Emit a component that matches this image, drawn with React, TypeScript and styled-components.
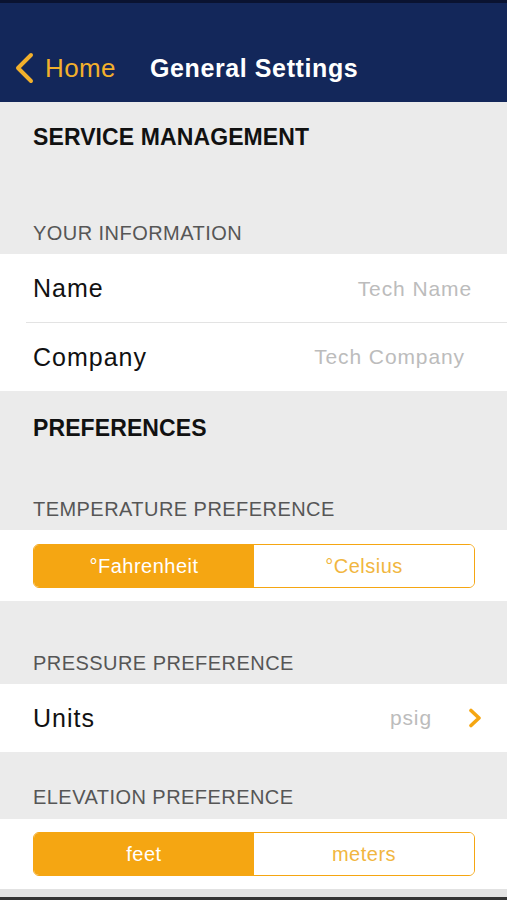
import React from "react";
import styled, { createGlobalStyle } from "styled-components";

const Global = createGlobalStyle`
  html, body { margin: 0; padding: 0; background: #ebebeb; }
  body { font-family: "Liberation Sans", Arial, sans-serif; -webkit-font-smoothing: antialiased; }
  * { box-sizing: border-box; }
`;

const ORANGE = "#f5a612";

const Page = styled.div`
  width: 507px;
  height: 900px;
  overflow: hidden;
  background: #ebebeb;
  display: flex;
  flex-direction: column;
`;

const NavBar = styled.header`
  height: 102px;
  background: #13275a;
  border-top: 3px solid #0a1331;
  display: flex;
  align-items: center;
  padding: 31px 0 0 14px;
  flex-shrink: 0;
`;

const Back = styled.div`
  display: flex;
  align-items: center;
  color: #f2b02c;
  font-size: 26px;
  line-height: 30px;
  letter-spacing: 0.4px;
  gap: 11px;
  width: 136px;
`;

const Title = styled.div`
  color: #ffffff;
  font-size: 25px;
  line-height: 30px;
  font-weight: 700;
  letter-spacing: 0.6px;
`;

const SectionTitle = styled.div<{ $h: number; $top: number }>`
  height: ${(p) => p.$h}px;
  padding: ${(p) => p.$top}px 33px 0;
  font-size: 23px;
  line-height: 23px;
  font-weight: 700;
  color: #111;
  letter-spacing: 0.1px;
`;

const GroupHeader = styled.div<{ $h: number; $bottom: number }>`
  height: ${(p) => p.$h}px;
  display: flex;
  align-items: flex-end;
  padding: 0 33px ${(p) => p.$bottom}px;
  font-size: 20px;
  line-height: 20px;
  color: #565656;
  letter-spacing: 0.45px;
`;

const Group = styled.div<{ $top?: number; $bottom?: number }>`
  background: #fff;
  display: flex;
  flex-direction: column;
  padding: ${(p) => (p.$top !== undefined ? `${p.$top}px 32px ${p.$bottom}px 33px` : "0")};
`;

const Row = styled.div<{ $sep?: boolean; $h?: number }>`
  height: ${(p) => p.$h ?? 68}px;
  display: flex;
  align-items: center;
  justify-content: space-between;
  padding: 0 0 0 33px;
  position: relative;
  ${(p) =>
    p.$sep
      ? `&::after { content: ""; position: absolute; left: 26px; right: 0; bottom: 0; height: 1px; background: #e3e3e3; }`
      : ""}
`;

const Label = styled.span`
  font-size: 25px;
  color: #111;
  letter-spacing: 1px;
`;

const Value = styled.span<{ $right: number }>`
  font-size: 21px;
  color: #bcbcbc;
  letter-spacing: 0.9px;
  margin-right: ${(p) => p.$right}px;
`;

const Detail = styled.div`
  display: flex;
  align-items: center;
  gap: 36px;
  margin-right: 25px;
`;

const Segmented = styled.div`
  height: 44px;
  border: 1.5px solid ${ORANGE};
  border-radius: 6px;
  display: grid;
  grid-template-columns: 1fr 1fr;
  overflow: hidden;
`;

const Segment = styled.div<{ $on?: boolean }>`
  display: flex;
  align-items: center;
  justify-content: center;
  font-size: 20px;
  letter-spacing: 0.5px;
  background: ${(p) => (p.$on ? ORANGE : "#fff")};
  color: ${(p) => (p.$on ? "#fff" : "#f1b640")};
`;

const BottomBar = styled.div`
  margin-top: auto;
  height: 11px;
  background: #e2e2e2;
  border-bottom: 3px solid #333;
`;

const BackChevron = () => (
  <svg width="20" height="32" viewBox="0 0 20 32">
    <path d="M17 3 L4 16 L17 29" fill="none" stroke="#f2b02c" strokeWidth="4" strokeLinecap="round" strokeLinejoin="round" />
  </svg>
);

const RowChevron = () => (
  <svg width="14" height="20" viewBox="0 0 14 20">
    <path d="M3 2.5 L11 10 L3 17.5" fill="none" stroke={ORANGE} strokeWidth="3.6" strokeLinecap="round" strokeLinejoin="round" />
  </svg>
);

export default function App() {
  return (
    <Page>
      <Global />
      <NavBar>
        <Back>
          <BackChevron />
          <span>Home</span>
        </Back>
        <Title>General Settings</Title>
      </NavBar>

      <SectionTitle $h={93} $top={24}>SERVICE MANAGEMENT</SectionTitle>
      <GroupHeader $h={59} $bottom={11}>YOUR INFORMATION</GroupHeader>
      <Group>
        <Row $sep $h={69}>
          <Label>Name</Label>
          <Value $right={35}>Tech Name</Value>
        </Row>
        <Row>
          <Label>Company</Label>
          <Value $right={42}>Tech Company</Value>
        </Row>
      </Group>

      <SectionTitle $h={79} $top={26}>PREFERENCES</SectionTitle>
      <GroupHeader $h={60} $bottom={11}>TEMPERATURE PREFERENCE</GroupHeader>
      <Group $top={14} $bottom={13}>
        <Segmented>
          <Segment $on>°Fahrenheit</Segment>
          <Segment>°Celsius</Segment>
        </Segmented>
      </Group>

      <GroupHeader $h={83} $bottom={11}>PRESSURE PREFERENCE</GroupHeader>
      <Group>
        <Row>
          <Label>Units</Label>
          <Detail>
            <Value $right={0}>psig</Value>
            <RowChevron />
          </Detail>
        </Row>
      </Group>

      <GroupHeader $h={67} $bottom={12}>ELEVATION PREFERENCE</GroupHeader>
      <Group $top={13} $bottom={13}>
        <Segmented>
          <Segment $on>feet</Segment>
          <Segment>meters</Segment>
        </Segmented>
      </Group>
      <BottomBar />
    </Page>
  );
}
